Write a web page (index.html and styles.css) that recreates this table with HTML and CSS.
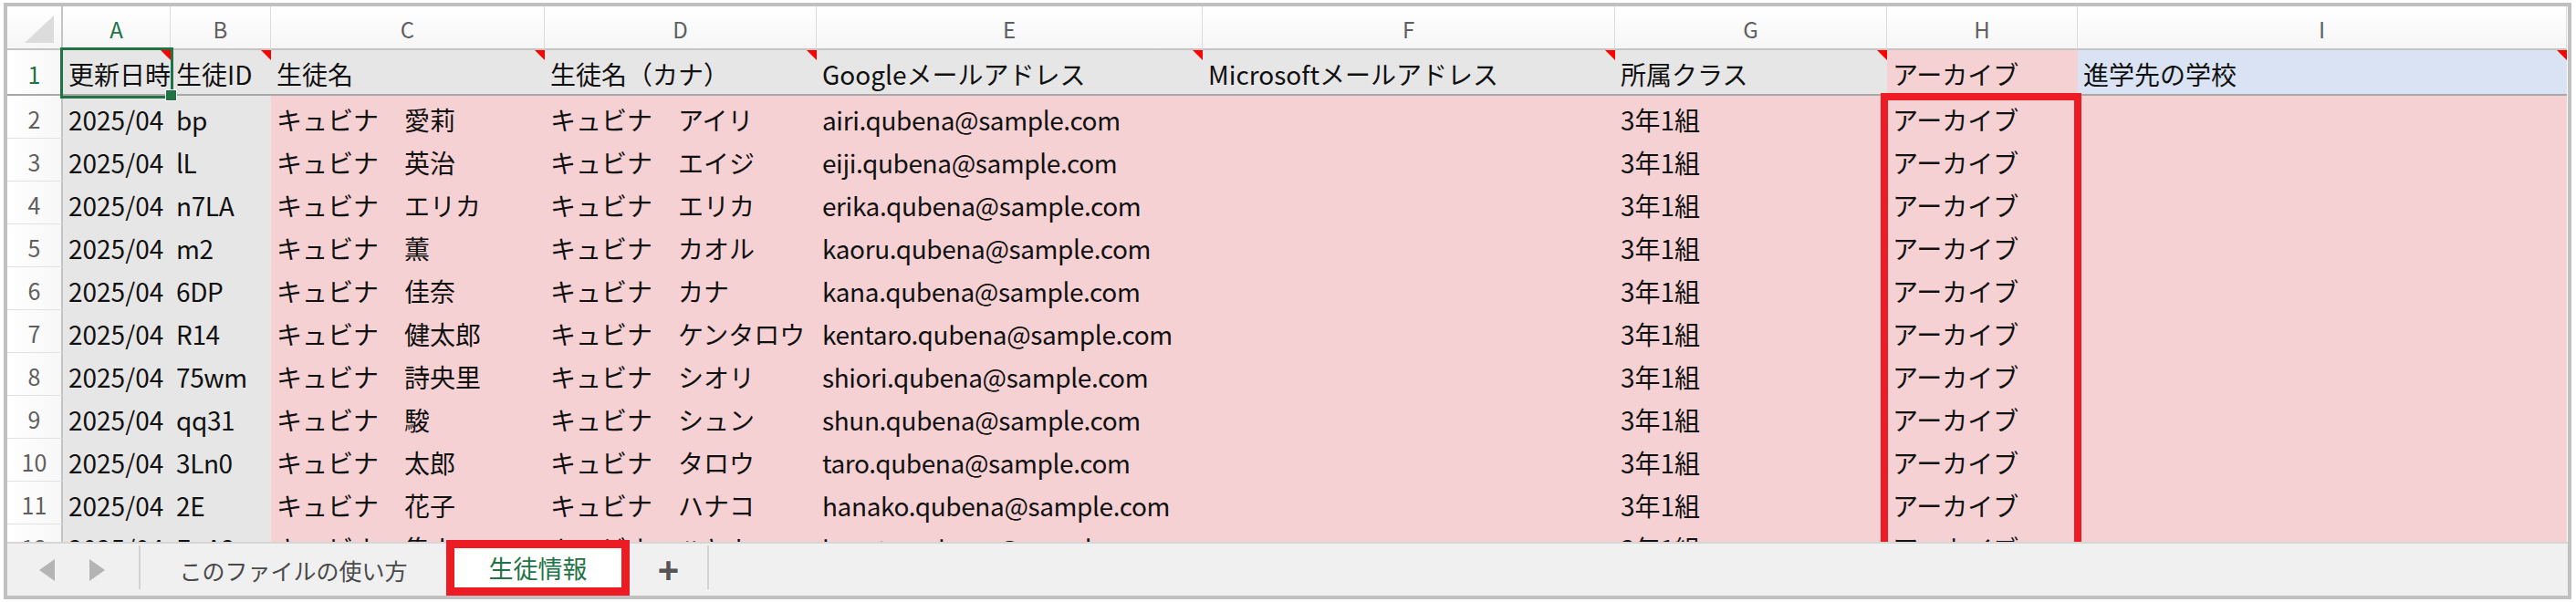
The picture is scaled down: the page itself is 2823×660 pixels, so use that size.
FILE: index.html
```html
<!DOCTYPE html>
<html lang="ja">
<head>
<meta charset="utf-8">
<title>生徒情報</title>
<link rel="stylesheet" href="styles.css">
</head>
<body>
<div class="frame">
  <div class="sheet">
    <div class="grid">
      <div class="ch corner"><span class="corner-tri"></span></div>
      <div class="ch sel">A</div>
      <div class="ch">B</div>
      <div class="ch">C</div>
      <div class="ch">D</div>
      <div class="ch">E</div>
      <div class="ch">F</div>
      <div class="ch">G</div>
      <div class="ch">H</div>
      <div class="ch">I</div>

      <div class="rh hr sel">1</div>
      <div class="c g hr cm active">更新日時</div>
      <div class="c g hr cm">生徒ID</div>
      <div class="c g hr cm">生徒名</div>
      <div class="c g hr cm">生徒名（カナ）</div>
      <div class="c g hr cm">Googleメールアドレス</div>
      <div class="c g hr cm">Microsoftメールアドレス</div>
      <div class="c g hr cm">所属クラス</div>
      <div class="c p hr">アーカイブ</div>
      <div class="c b hr cm">進学先の学校</div>

      <div class="rh">2</div><div class="c g">2025/04</div><div class="c g en">bp</div><div class="c p">キュビナ　愛莉</div><div class="c p">キュビナ　アイリ</div><div class="c p en">airi.qubena@sample.com</div><div class="c p"></div><div class="c p">3年1組</div><div class="c p">アーカイブ</div><div class="c p"></div>
      <div class="rh">3</div><div class="c g">2025/04</div><div class="c g en">lL</div><div class="c p">キュビナ　英治</div><div class="c p">キュビナ　エイジ</div><div class="c p en">eiji.qubena@sample.com</div><div class="c p"></div><div class="c p">3年1組</div><div class="c p">アーカイブ</div><div class="c p"></div>
      <div class="rh">4</div><div class="c g">2025/04</div><div class="c g en">n7LA</div><div class="c p">キュビナ　エリカ</div><div class="c p">キュビナ　エリカ</div><div class="c p en">erika.qubena@sample.com</div><div class="c p"></div><div class="c p">3年1組</div><div class="c p">アーカイブ</div><div class="c p"></div>
      <div class="rh">5</div><div class="c g">2025/04</div><div class="c g en">m2</div><div class="c p">キュビナ　薫</div><div class="c p">キュビナ　カオル</div><div class="c p en">kaoru.qubena@sample.com</div><div class="c p"></div><div class="c p">3年1組</div><div class="c p">アーカイブ</div><div class="c p"></div>
      <div class="rh">6</div><div class="c g">2025/04</div><div class="c g en">6DP</div><div class="c p">キュビナ　佳奈</div><div class="c p">キュビナ　カナ</div><div class="c p en">kana.qubena@sample.com</div><div class="c p"></div><div class="c p">3年1組</div><div class="c p">アーカイブ</div><div class="c p"></div>
      <div class="rh">7</div><div class="c g">2025/04</div><div class="c g en">R14</div><div class="c p">キュビナ　健太郎</div><div class="c p">キュビナ　ケンタロウ</div><div class="c p en">kentaro.qubena@sample.com</div><div class="c p"></div><div class="c p">3年1組</div><div class="c p">アーカイブ</div><div class="c p"></div>
      <div class="rh">8</div><div class="c g">2025/04</div><div class="c g en">75wm</div><div class="c p">キュビナ　詩央里</div><div class="c p">キュビナ　シオリ</div><div class="c p en">shiori.qubena@sample.com</div><div class="c p"></div><div class="c p">3年1組</div><div class="c p">アーカイブ</div><div class="c p"></div>
      <div class="rh">9</div><div class="c g">2025/04</div><div class="c g en">qq31</div><div class="c p">キュビナ　駿</div><div class="c p">キュビナ　シュン</div><div class="c p en">shun.qubena@sample.com</div><div class="c p"></div><div class="c p">3年1組</div><div class="c p">アーカイブ</div><div class="c p"></div>
      <div class="rh">10</div><div class="c g">2025/04</div><div class="c g en">3Ln0</div><div class="c p">キュビナ　太郎</div><div class="c p">キュビナ　タロウ</div><div class="c p en">taro.qubena@sample.com</div><div class="c p"></div><div class="c p">3年1組</div><div class="c p">アーカイブ</div><div class="c p"></div>
      <div class="rh">11</div><div class="c g">2025/04</div><div class="c g en">2E</div><div class="c p">キュビナ　花子</div><div class="c p">キュビナ　ハナコ</div><div class="c p en">hanako.qubena@sample.com</div><div class="c p"></div><div class="c p">3年1組</div><div class="c p">アーカイブ</div><div class="c p"></div>
      <div class="rh">12</div><div class="c g">2025/04</div><div class="c g en">EuA2</div><div class="c p">キュビナ　隼人</div><div class="c p">キュビナ　ハヤト</div><div class="c p en">hayato.qubena@sample.com</div><div class="c p"></div><div class="c p">3年1組</div><div class="c p">アーカイブ</div><div class="c p"></div>
    </div>
    <div class="mark-col"></div>
  </div>
  <div class="tabbar">
    <div class="nav">
      <span class="arrow left"></span>
      <span class="arrow right"></span>
    </div>
    <div class="sep"></div>
    <div class="tab">このファイルの使い方</div>
    <div class="tab active-tab">生徒情報</div>
    <div class="add">+</div>
    <div class="sep"></div>
  </div>
</div>
</body>
</html>
```

FILE: styles.css
```css
* { box-sizing: border-box; }

html, body {
  margin: 0;
  padding: 0;
  background: #ffffff;
}

body {
  padding: 3px 5px 3px 4px;
  font-family: "Noto Sans CJK JP", "Noto Sans", sans-serif;
  color: #111;
}

.frame {
  border: 4px solid #c0c0c0;
  width: 2814px;
  height: 654px;
  display: flex;
  flex-direction: column;
  background: #fff;
}

.sheet {
  position: relative;
  height: 587px;
  overflow: hidden;
  flex: none;
}

.grid {
  display: grid;
  grid-template-columns: 61px 118px 110px 300px 298px 423px 452px 298px 209px 536px;
  grid-template-rows: 48px 50px;
  grid-auto-rows: 47px;
}

/* column headers */
.ch {
  background: linear-gradient(#ffffff, #f6f6f6);
  border-right: 1px solid #dcdcdc;
  border-bottom: 2px solid #c4c4c4;
  display: flex;
  align-items: center;
  justify-content: center;
  font-size: 24px;
  color: #5f5f5f;
  padding-top: 2px;
}
.ch.sel { color: #217346; }
.corner {
  position: relative;
  border-right: 2px solid #c4c4c4;
}
.corner-tri {
  position: absolute;
  right: 8px;
  bottom: 6px;
  width: 0;
  height: 0;
  border-left: 32px solid transparent;
  border-bottom: 30px solid #dcdcdc;
}

/* row headers */
.rh {
  background: linear-gradient(90deg, #ffffff, #f7f7f7);
  border-right: 2px solid #c4c4c4;
  border-bottom: 1px solid #e2e2e2;
  display: flex;
  align-items: center;
  justify-content: center;
  font-size: 25px;
  color: #5f5f5f;
  padding-top: 4px;
}
.rh.sel { color: #217346; }

/* cells */
.c {
  position: relative;
  display: flex;
  align-items: center;
  padding: 4px 0 0 6px;
  font-size: 28px;
  white-space: nowrap;
  overflow: hidden;
  color: #111;
}
.c.en { letter-spacing: -0.4px; }
.hr { border-bottom: 2px solid #a8a8a8; }
.g { background: #e7e6e6; }
.p { background: #f6d1d4; }
.b { background: #dae3f3; }

.cm::after {
  content: "";
  position: absolute;
  top: 0;
  right: 0;
  width: 0;
  height: 0;
  border-top: 11px solid #ff0000;
  border-left: 11px solid transparent;
}

.c.active {
  overflow: visible;
  outline: 3px solid #217346;
  z-index: 3;
}
.c.active::before {
  content: "";
  position: absolute;
  right: -7px;
  bottom: -8px;
  width: 11px;
  height: 11px;
  background: #217346;
  border: 1px solid #ffffff;
}

.mark-col {
  position: absolute;
  left: 2053px;
  top: 95px;
  width: 220px;
  height: 510px;
  border: 8px solid #ed1c24;
  z-index: 5;
}

/* tab bar */
.tabbar {
  flex: 1;
  display: flex;
  align-items: center;
  background: #f0f0f0;
  border-top: 2px solid #d6d6d6;
  position: relative;
  z-index: 6;
}
.nav {
  width: 144px;
  display: flex;
  align-items: center;
  gap: 38px;
  padding-left: 35px;
}
.arrow {
  width: 0;
  height: 0;
  border-top: 12px solid transparent;
  border-bottom: 12px solid transparent;
}
.arrow.left { border-right: 17px solid #b4b4b4; }
.arrow.right { border-left: 17px solid #b4b4b4; }

.sep {
  width: 2px;
  height: 48px;
  background: #d2d2d2;
  align-self: flex-start;
  margin-top: 2px;
}
.tab {
  width: 335px;
  text-align: center;
  font-size: 25px;
  color: #4a4a4a;
}
.active-tab {
  width: 201px;
  align-self: stretch;
  margin-top: -4px;
  background: #ffffff;
  border: 9px solid #ed1c24;
  color: #217346;
  font-size: 27px;
  display: flex;
  align-items: center;
  justify-content: center;
}
.add {
  width: 85px;
  text-align: center;
  font-size: 40px;
  font-weight: bold;
  color: #555;
  font-family: "Liberation Sans", sans-serif;
  line-height: 1;
}
```
